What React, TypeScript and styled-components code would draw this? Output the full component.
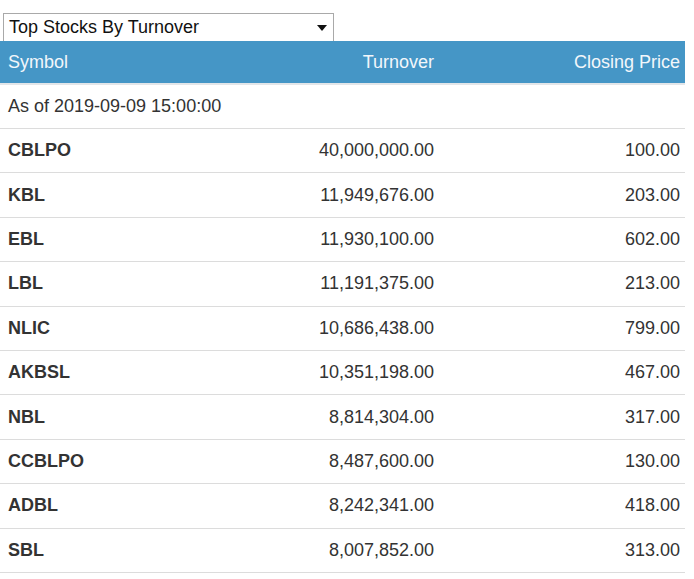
import React from "react";
import styled, { createGlobalStyle } from "styled-components";

const Global = createGlobalStyle`
  body { margin: 0; background: #fff; font-family: "Liberation Sans", Arial, sans-serif; }
`;
const Wrap = styled.div`padding-top: 13px; width: 685px;`;
const Select = styled.div`
  margin-left: 3px; width: 331px; height: 28px; box-sizing: border-box;
  border: 1px solid #a9a9a9; border-bottom: none; display: flex; align-items: center; justify-content: space-between;
  padding: 0 6px 0 5px; font-size: 18px; color: #111;
`;
const Arrow = styled.span`
  width: 0; height: 0; border-left: 5px solid transparent; border-right: 5px solid transparent; border-top: 6px solid #111;
`;
const Table = styled.div`width: 685px;`;
const Row = styled.div<{ $head?: boolean }>`
  display: grid; grid-template-columns: 250px 192px 243px; align-items: center;
  height: ${p => (p.$head ? "44px" : "44.4px")}; box-sizing: border-box;
  background: ${p => (p.$head ? "#4596c6" : "#fff")};
  color: ${p => (p.$head ? "#f2f7fb" : "#333")};
  border-bottom: ${p => (p.$head ? "2px solid #e3e6e9" : "1px solid #dcdcdc")};
  font-size: 18px;
`;
const Cell = styled.div<{ $right?: boolean; $bold?: boolean }>`
  padding: ${p => (p.$right ? "0 8px 0 0" : "0 0 0 8px")};
  text-align: ${p => (p.$right ? "right" : "left")};
  font-weight: ${p => (p.$bold ? 700 : 400)};
  white-space: nowrap;
`;
const LastCell = styled(Cell)`padding-right: 5px;`;
const Info = styled.div`
  height: 44px; box-sizing: border-box; display: flex; align-items: center; padding-left: 8px;
  font-size: 18px; color: #333; border-bottom: 1px solid #dcdcdc;
`;

const data: [string, string, string][] = [
  ["CBLPO", "40,000,000.00", "100.00"],
  ["KBL", "11,949,676.00", "203.00"],
  ["EBL", "11,930,100.00", "602.00"],
  ["LBL", "11,191,375.00", "213.00"],
  ["NLIC", "10,686,438.00", "799.00"],
  ["AKBSL", "10,351,198.00", "467.00"],
  ["NBL", "8,814,304.00", "317.00"],
  ["CCBLPO", "8,487,600.00", "130.00"],
  ["ADBL", "8,242,341.00", "418.00"],
  ["SBL", "8,007,852.00", "313.00"],
];

export default function App() {
  return (
    <Wrap>
      <Global />
      <Select>Top Stocks By Turnover<Arrow /></Select>
      <Table>
        <Row $head>
          <Cell>Symbol</Cell>
          <Cell $right>Turnover</Cell>
          <LastCell $right>Closing Price</LastCell>
        </Row>
        <Info>As of 2019-09-09 15:00:00</Info>
        {data.map(d => (
          <Row key={d[0]}>
            <Cell $bold>{d[0]}</Cell>
            <Cell $right>{d[1]}</Cell>
            <LastCell $right>{d[2]}</LastCell>
          </Row>
        ))}
      </Table>
    </Wrap>
  );
}
